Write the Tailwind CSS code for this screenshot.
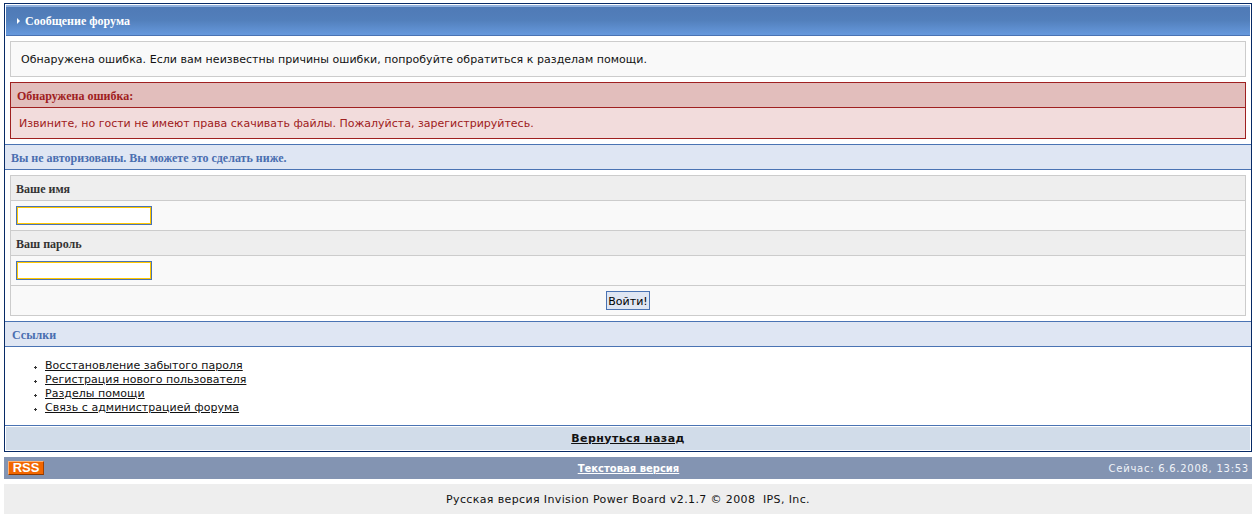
<!DOCTYPE html>
<html lang="ru">
<head>
<meta charset="utf-8">
<script src="https://cdn.jsdelivr.net/npm/@tailwindcss/browser@4"></script>
<title>Сообщение форума</title>
</head>
<body class="bg-white font-['DejaVu_Sans',Verdana,sans-serif] text-[11px] leading-[14px] text-black">
<div class="px-[4px] pt-[3px] w-[1256px]">
  <div class="border border-[#072a66] h-[449px] flex flex-col">
    <div class="mx-[1px] mt-[1px] h-[31px] shrink-0 flex items-center pl-[11px] pt-[2px] bg-gradient-to-b from-[#4f79b5] via-[#527fbb] to-[#6699dd] border-b border-[#4a73b3] shadow-[inset_0_2px_0_#8fb0dd] text-white font-['Liberation_Serif',serif] font-bold text-[12px]">
      <svg width="4" height="6" viewBox="0 0 4 6" class="mr-[4px]"><path d="M0 0l3 3-3 3z" fill="#fff"/></svg>
      <span>Сообщение форума</span>
    </div>
    <div class="mx-[5px] mt-[5px] h-[36px] shrink-0 border border-[#ccc] bg-[#f9f9f9] flex items-center pl-[10px] pt-[2px] text-[#111] tracking-[0.03px]">Обнаружена ошибка. Если вам неизвестны причины ошибки, попробуйте обратиться к разделам помощи.</div>
    <div class="mx-[5px] mt-[5px] h-[57px] shrink-0 border border-[#9f2020] flex flex-col bg-[#f2dcdc]">
      <div class="h-[25px] shrink-0 bg-[#e2bebc] border-b border-[#9f2020] flex items-center pl-[6px] pt-[2px] font-['Liberation_Serif',serif] font-bold text-[12px] text-[#9f2020]">Обнаружена ошибка:</div>
      <div class="flex-1 flex items-center pl-[8px] pt-[2px] text-[#9f2020]">Извините, но гости не имеют права скачивать файлы. Пожалуйста, зарегистрируйтесь.</div>
    </div>
    <div class="mt-[5px] h-[26px] shrink-0 border-t border-b border-[#4a73b3] bg-[#dfe6f3] flex items-center pl-[6px] pt-[2px] font-['Liberation_Serif',serif] font-bold text-[12px] text-[#4a6eb0]">Вы не авторизованы. Вы можете это сделать ниже.</div>
    <div class="mx-[5px] mt-[5px] h-[141px] shrink-0 border border-[#ccc] flex flex-col bg-[#f9f9f9]">
      <div class="h-[25px] shrink-0 bg-[#eee] border-b border-[#ccc] flex items-center pl-[5px] pt-[2px] font-['Liberation_Serif',serif] font-bold text-[12px] text-[#333]">Ваше имя</div>
      <div class="h-[30px] shrink-0 border-b border-[#ccc] flex items-center pl-[5px]"><input type="text" class="w-[136px] h-[19px] bg-white border border-[#4a73b3] shadow-[inset_0_0_0_1px_#ffc800] outline-none"></div>
      <div class="h-[25px] shrink-0 bg-[#eee] border-b border-[#ccc] flex items-center pl-[5px] pt-[2px] font-['Liberation_Serif',serif] font-bold text-[12px] text-[#333]">Ваш пароль</div>
      <div class="h-[30px] shrink-0 border-b border-[#ccc] flex items-center pl-[5px]"><input type="password" class="w-[136px] h-[19px] bg-white border border-[#4a73b3] shadow-[inset_0_0_0_1px_#ffc800] outline-none"></div>
      <div class="flex-1 flex items-center justify-center"><button type="button" class="w-[44px] h-[19px] pt-[2px] border border-[#4a73b3] bg-[#dfe6f3] text-[11px] text-black leading-none">Войти!</button></div>
    </div>
    <div class="mt-[5px] h-[26px] shrink-0 border-t border-b border-[#4a73b3] bg-[#dfe6f3] flex items-center pl-[7px] pt-[2px] font-['Liberation_Serif',serif] font-bold text-[12px] text-[#4a6eb0]">Ссылки</div>
    <ul class="h-[78px] shrink-0 pt-[12px] pl-[28px] text-[#111] tracking-[0.03px]">
      <li class="flex items-center h-[14px]"><svg width="5" height="5" viewBox="0 0 5 5" class="mr-[7px] mt-[2px]"><path d="M2 1h1v1h1v1h-1v1h-1v-1h-1v-1h1z" fill="#333"/></svg><a href="#" class="underline">Восстановление забытого пароля</a></li>
      <li class="flex items-center h-[14px]"><svg width="5" height="5" viewBox="0 0 5 5" class="mr-[7px] mt-[2px]"><path d="M2 1h1v1h1v1h-1v1h-1v-1h-1v-1h1z" fill="#333"/></svg><a href="#" class="underline">Регистрация нового пользователя</a></li>
      <li class="flex items-center h-[14px]"><svg width="5" height="5" viewBox="0 0 5 5" class="mr-[7px] mt-[2px]"><path d="M2 1h1v1h1v1h-1v1h-1v-1h-1v-1h1z" fill="#333"/></svg><a href="#" class="underline">Разделы помощи</a></li>
      <li class="flex items-center h-[14px]"><svg width="5" height="5" viewBox="0 0 5 5" class="mr-[7px] mt-[2px]"><path d="M2 1h1v1h1v1h-1v1h-1v-1h-1v-1h1z" fill="#333"/></svg><a href="#" class="underline">Связь с администрацией форума</a></li>
    </ul>
    <div class="flex-1 border-t border-[#4a73b3] p-[1px]"><div class="h-full bg-[#d1dce9] flex items-center justify-center"><a href="#" class="underline font-bold text-[#111] tracking-[0.45px]">Вернуться назад</a></div></div>
  </div>
  <div class="mt-[5px] h-[22px] bg-[#8394b2] grid grid-cols-3 items-center pl-[4px] pr-[3px]">
    <span class="w-[36px] h-[14px] bg-[#f26600] border border-[#ffb070] border-r-[#a04000] border-b-[#8a3800] text-white font-['Liberation_Sans',sans-serif] font-bold text-[13px] leading-[12px] flex items-center justify-center">RSS</span>
    <a href="#" class="underline font-bold text-white text-[10px] text-center pt-[2px]">Текстовая версия</a>
    <span class="text-[#f0f3f8] text-[10px] text-right tracking-[0.74px] pt-[2px]">Сейчас: 6.6.2008, 13:53</span>
  </div>
  <div class="mt-[5px] h-[30px] bg-[#eee] flex items-center justify-center pt-[2px] text-[#111] tracking-[0.37px]">Русская версия Invision Power Board v2.1.7 © 2008 &nbsp;IPS, Inc.</div>
</div>
</body>
</html>
